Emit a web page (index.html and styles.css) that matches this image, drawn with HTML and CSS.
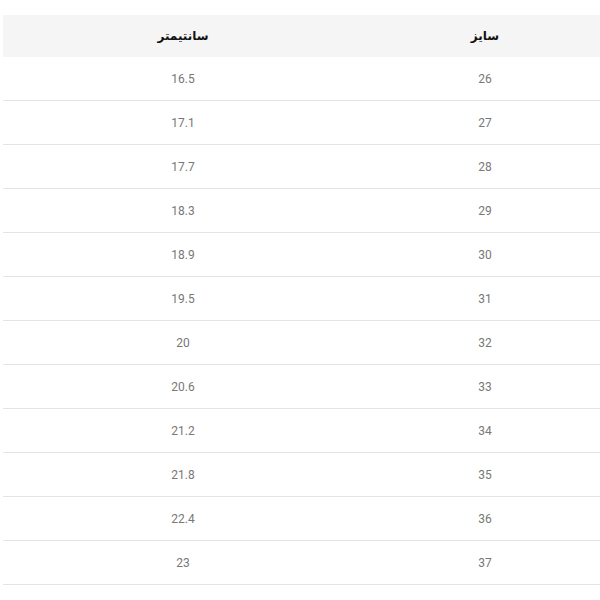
FILE: index.html
```html
<!DOCTYPE html>
<html lang="fa" dir="rtl">
<head>
<meta charset="utf-8">
<link rel="stylesheet" href="styles.css">
</head>
<body>
<table class="size-table">
  <colgroup>
    <col class="col-size">
    <col class="col-cm">
  </colgroup>
  <thead>
    <tr><th>سایز</th><th>سانتیمتر</th></tr>
  </thead>
  <tbody>
    <tr><td>26</td><td>16.5</td></tr>
    <tr><td>27</td><td>17.1</td></tr>
    <tr><td>28</td><td>17.7</td></tr>
    <tr><td>29</td><td>18.3</td></tr>
    <tr><td>30</td><td>18.9</td></tr>
    <tr><td>31</td><td>19.5</td></tr>
    <tr><td>32</td><td>20</td></tr>
    <tr><td>33</td><td>20.6</td></tr>
    <tr><td>34</td><td>21.2</td></tr>
    <tr><td>35</td><td>21.8</td></tr>
    <tr><td>36</td><td>22.4</td></tr>
    <tr><td>37</td><td>23</td></tr>
  </tbody>
</table>
</body>
</html>
```
FILE: styles.css
```css
html, body {
  margin: 0;
  padding: 0;
  background: #fff;
  overflow: hidden;
}
body {
  padding: 15px 0 0 0;
  font-family: Roboto, "DejaVu Sans", sans-serif;
}
.size-table {
  border-collapse: collapse;
  table-layout: fixed;
  width: 604px;
  margin-right: -7px;
}
.col-size { width: 244px; }
.col-cm { width: 360px; }
.size-table th {
  background: #f5f5f5;
  height: 42px;
  padding: 0;
  font-size: 12px;
  font-weight: bold;
  color: #111;
  text-align: center;
  vertical-align: middle;
}
.size-table td {
  height: 43px;
  padding: 0;
  font-size: 12px;
  color: #777;
  text-align: center;
  vertical-align: middle;
  border-bottom: 1px solid #e4e4e4;
}
```
